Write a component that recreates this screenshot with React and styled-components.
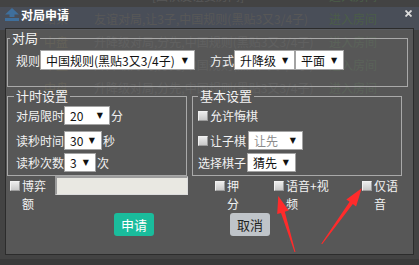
import React from 'react';
import styled, { createGlobalStyle } from 'styled-components';

const GlobalStyle = createGlobalStyle`
  html, body {
    margin: 0;
    padding: 0;
    background: #3a3a3a;
  }
  body {
    font-family: "Noto Sans CJK SC", "Liberation Sans", sans-serif;
    overflow: hidden;
  }
`;

const rooms = [
  { status: '', desc: '[围棋友谊赛房间]', indent: 58 },
  { status: '结果', desc: '友谊对局,让3子,中国规则(黑贴3又3/4子)', active: true },
  { status: '中盘', desc: '升降级对局,分先,中国规则(黑贴3又3/4子)', warn: true },
  { status: '中盘', desc: '升降级对局,分先,中国规则(黑贴3又3/4子)', warn: true },
  { status: '中盘', desc: '升降级对局,分先,中国规则(黑贴3又3/4子)', warn: true },
];

function App() {
  return (
    <Page>
      <GlobalStyle />
      <RoomList>
        {rooms.map((r, i) => (
          <RoomRow key={i} $active={r.active}>
            <Status $warn={r.warn}>{r.status}</Status>
            <Desc $indent={r.indent}>{r.desc}</Desc>
            <Enter>进入房间</Enter>
          </RoomRow>
        ))}
      </RoomList>

      <Dialog>
        <TitleBar>
          <svg width="14" height="13" viewBox="0 0 14 13">
            <polygon points="7,0 14,6.5 0,6.5" fill="#3f6f9c" />
            <rect x="4.5" y="6" width="5" height="3" fill="#3f6f9c" />
            <rect x="0" y="10" width="14" height="3" fill="#3f6f9c" />
          </svg>
          <Title>对局申请</Title>
          <Close>
            <svg width="7" height="7" viewBox="0 0 7 7">
              <path d="M0.5 0.5 L6.5 6.5 M6.5 0.5 L0.5 6.5" stroke="#dcdcdc" strokeWidth="1.8" />
            </svg>
          </Close>
        </TitleBar>

        <Body>
          <Group $pad="4px 8px 16px 8px">
            <Legend $ml={-6}>对局</Legend>
            <Row $h={20}>
              <Text>规则</Text>
              <Select $w={155} $h={20}>中国规则(黑贴3又3/4子)<Caret>▼</Caret></Select>
              <Text $ml={15}>方式</Text>
              <Select $w={61} $h={20}>升降级<Caret>▼</Caret></Select>
              <Select $w={49} $h={20}>平面<Caret>▼</Caret></Select>
            </Row>
          </Group>

          <Columns>
            <Group $pad="2px 8px 3px 8px">
              <Legend $ml={-2}>计时设置</Legend>
              <Row>
                <Text $w={48}>对局限时</Text>
                <Select $w={46}>20<Caret>▼</Caret></Select>
                <Text $ml={1}>分</Text>
              </Row>
              <Row $mt={6}>
                <Text $w={48}>读秒时间</Text>
                <Select $w={38}>30<Caret>▼</Caret></Select>
                <Text $ml={1}>秒</Text>
              </Row>
              <Row $mt={3}>
                <Text $w={48}>读秒次数</Text>
                <Select $w={32}>3<Caret>▼</Caret></Select>
                <Text $ml={1}>次</Text>
              </Row>
            </Group>

            <Group $pad="2px 5px 3px 5px">
              <Legend $ml={0}>基本设置</Legend>
              <Row>
                <Check />
                <Text>允许悔棋</Text>
              </Row>
              <Row $mt={6}>
                <Check />
                <Text $w={38}>让子棋</Text>
                <Select $w={55} $disabled>让先<Caret>▼</Caret></Select>
              </Row>
              <Row $mt={3}>
                <Text $w={49}>选择棋子</Text>
                <Select $w={49}>猜先<Caret>▼</Caret></Select>
              </Row>
            </Group>
          </Columns>

          <Options>
            <Option>
              <Check $top />
              <Wrap $w={26}>博弈额</Wrap>
            </Option>
            <Stake />
            <Option>
              <Check $top />
              <Wrap $w={13}>押分</Wrap>
            </Option>
            <Option>
              <Check $top />
              <Wrap $w={48}>语音+视频</Wrap>
            </Option>
            <Option>
              <Check $top />
              <Wrap $w={26}>仅语音</Wrap>
            </Option>
          </Options>

          <Actions>
            <Button $primary>申请</Button>
            <Button>取消</Button>
          </Actions>
        </Body>
      </Dialog>

      <Marks width="419" height="265" viewBox="0 0 419 265">
        <polygon
          points="294.5,252.1 281,212.9 277.2,214 278.3,196 288.7,210.6 284.8,211.7 295.5,251.9"
          fill="#ff2b2b"
        />
        <polygon
          points="321.3,243.7 349.6,201.7 346.3,199.4 361.7,188.3 356.1,206.4 352.8,204.1 322.1,244.3"
          fill="#ff2b2b"
        />
      </Marks>
    </Page>
  );
}

const Page = styled.div`
  position: relative;
  width: 419px;
  height: 265px;
  overflow: hidden;
  background: #3a3a3a;
`;

const RoomList = styled.div`
  margin-top: -16px;
`;

const RoomRow = styled.div`
  display: grid;
  grid-template-columns: 50px 235px 1fr;
  align-items: center;
  height: 23px;
  padding-left: 44px;
  font-size: 12px;
  color: #a8a8a8;
  white-space: nowrap;
  background: ${p => (p.$active ? '#5a73aa' : 'transparent')};
`;

const Status = styled.span`
  color: ${p => (p.$warn ? '#c8b050' : '#a8a8a8')};
`;

const Desc = styled.span`
  padding-left: ${p => p.$indent || 0}px;
`;

const Enter = styled.span`
  color: #62c456;
`;

const Dialog = styled.div`
  position: absolute;
  top: 0;
  left: 0;
  width: 419px;
  height: 259px;
  box-sizing: border-box;
  padding: 0 5px 4px;
  display: flex;
  flex-direction: column;
  background: rgba(70, 70, 70, 0.82);
  color: #f2f2f2;
`;

const TitleBar = styled.div`
  height: 28px;
  flex-shrink: 0;
  display: flex;
  align-items: center;
  padding-top: 1px;
  box-sizing: border-box;
`;

const Title = styled.span`
  margin-left: 2px;
  font-size: 12px;
  font-weight: bold;
  color: #fff;
`;

const Close = styled.span`
  margin-left: auto;
  margin-right: 2px;
  display: flex;
  margin-top: -3px;
`;

const Body = styled.div`
  flex: 1;
  border: 1px solid #2c2c2c;
  background: rgba(104, 104, 104, 0.55);
  padding: 1px 5px 0 1px;
  font-size: 12px;
`;

const Group = styled.fieldset`
  margin: 0;
  min-width: 0;
  box-sizing: border-box;
  border: 1px solid #a9a9a9;
  padding: ${p => p.$pad};
`;

const Legend = styled.legend`
  margin-left: ${p => p.$ml}px;
  padding: 0 2px;
  font-size: 13px;
  line-height: 16px;
  color: #f4f4f4;
`;

const Columns = styled.div`
  display: grid;
  grid-template-columns: 180px 210px;
  column-gap: 5px;
  margin-top: 1px;
`;

const Row = styled.div`
  display: flex;
  align-items: center;
  height: ${p => p.$h || 19}px;
  margin-top: ${p => p.$mt || 0}px;
  line-height: 19px;
  white-space: nowrap;
`;

const Text = styled.span`
  display: inline-block;
  margin-left: ${p => p.$ml || 0}px;
  width: ${p => (p.$w ? `${p.$w}px` : 'auto')};
  color: #f2f2f2;
`;

const Select = styled.div`
  display: inline-flex;
  align-items: center;
  justify-content: space-between;
  width: ${p => p.$w}px;
  height: ${p => p.$h || 19}px;
  box-sizing: border-box;
  padding: 0 6px 0 5px;
  background: #fff;
  border: 1px solid #a3a3a3;
  color: ${p => (p.$disabled ? '#8c8c8c' : '#111')};
  font-size: 12px;
`;

const Caret = styled.span`
  font-family: "DejaVu Sans", sans-serif;
  font-size: 8px;
  color: #111;
`;

const Check = styled.span`
  display: inline-block;
  flex-shrink: 0;
  width: 10px;
  height: 10px;
  box-sizing: border-box;
  margin-right: 2px;
  margin-top: ${p => (p.$top ? '2px' : '0')};
  background: linear-gradient(#ececec, #c9c9c9);
  border: 1px solid #9b9b9b;
  border-top-color: #f2f2f2;
  border-left-color: #f2f2f2;
`;

const Options = styled.div`
  display: grid;
  grid-template-columns: 45px 160px 59px 88px 1fr;
  padding-left: 3px;
  height: 39px;
`;

const Option = styled.div`
  display: flex;
  align-items: flex-start;
  padding-top: 3px;
`;

const Wrap = styled.span`
  width: ${p => p.$w}px;
  line-height: 18px;
  margin-top: -2px;
  color: #f2f2f2;
  word-break: break-all;
`;

const Stake = styled.div`
  width: 133px;
  height: 19px;
  box-sizing: border-box;
  background: #e9e8e2;
  border: 1px solid #dcdcdc;
  border-top: 2px solid #9c9c9c;
  border-left: 2px solid #9c9c9c;
`;

const Actions = styled.div`
  display: flex;
  gap: 76px;
  margin-top: -2px;
  padding-left: 107px;
`;

const Button = styled.button`
  width: 40px;
  height: 23px;
  padding: 0;
  border: none;
  border-radius: 3px;
  background: ${p => (p.$primary ? '#1abc9c' : '#bfc4c9')};
  color: ${p => (p.$primary ? '#fff' : '#222')};
  font-family: "Noto Sans CJK SC", sans-serif;
  font-size: 13px;
`;

const Marks = styled.svg`
  position: absolute;
  top: 0;
  left: 0;
  pointer-events: none;
`;

export default App;
